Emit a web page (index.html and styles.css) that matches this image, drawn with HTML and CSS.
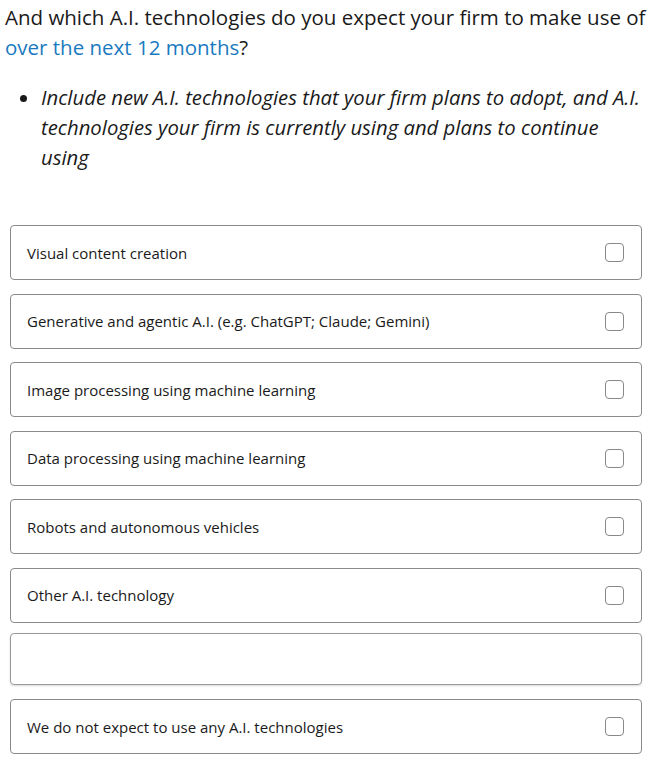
FILE: index.html
```html
<!DOCTYPE html>
<html>
<head>
<meta charset="utf-8">
<link rel="stylesheet" href="styles.css">
</head>
<body>
<div class="page">
  <h1 class="question">And which A.I. technologies do you expect your firm to make use of <span class="hl">over the next 12 months</span>?</h1>
  <ul class="notes">
    <li>Include new A.I. technologies that your firm plans to adopt, and A.I. technologies your firm is currently using and plans to continue using</li>
  </ul>
  <div class="options">
    <label class="opt"><span class="lbl">Visual content creation</span><span class="box"></span></label>
    <label class="opt"><span class="lbl">Generative and agentic A.I. (e.g. ChatGPT; Claude; Gemini)</span><span class="box"></span></label>
    <label class="opt"><span class="lbl">Image processing using machine learning</span><span class="box"></span></label>
    <label class="opt"><span class="lbl">Data processing using machine learning</span><span class="box"></span></label>
    <label class="opt"><span class="lbl">Robots and autonomous vehicles</span><span class="box"></span></label>
    <label class="opt other"><span class="lbl">Other A.I. technology</span><span class="box"></span></label>
    <div class="textin"></div>
    <label class="opt"><span class="lbl">We do not expect to use any A.I. technologies</span><span class="box"></span></label>
  </div>
</div>
</body>
</html>
```
FILE: styles.css
```css
html, body { margin: 0; padding: 0; background: #fff; }
body { font-family: "Open Sans", "Liberation Sans", sans-serif; color: #1a1a1a; }
.page { padding: 2px 2px 0 5px; }
.question { font-size: 20.5px; font-weight: 400; line-height: 30px; margin: 0; }
.hl { color: #1a7ac0; }
.notes { margin: 20px 0 0 0; padding: 0 0 0 36px; font-style: italic; font-size: 20.3px; line-height: 30px; }
.notes li { padding-left: 0; }
.options { margin-top: 53px; padding-left: 5px; padding-right: 6px; display: flex; flex-direction: column; }
.opt { display: flex; align-items: center; justify-content: space-between; height: 55px; box-sizing: border-box; border: 1px solid #8a8a8a; border-radius: 4px; padding: 0 17px 0 16px; margin-bottom: 13.5px; font-size: 15px; }
.opt.other { margin-bottom: 10.5px; }
.box { width: 19px; height: 19px; box-sizing: border-box; border: 1.5px solid #888; border-radius: 4px; flex: none; }
.textin { height: 52px; box-sizing: border-box; border: 1px solid #999; border-radius: 4px; margin-bottom: 14px; box-shadow: 0 1px 2px rgba(0,0,0,0.15); }
```
